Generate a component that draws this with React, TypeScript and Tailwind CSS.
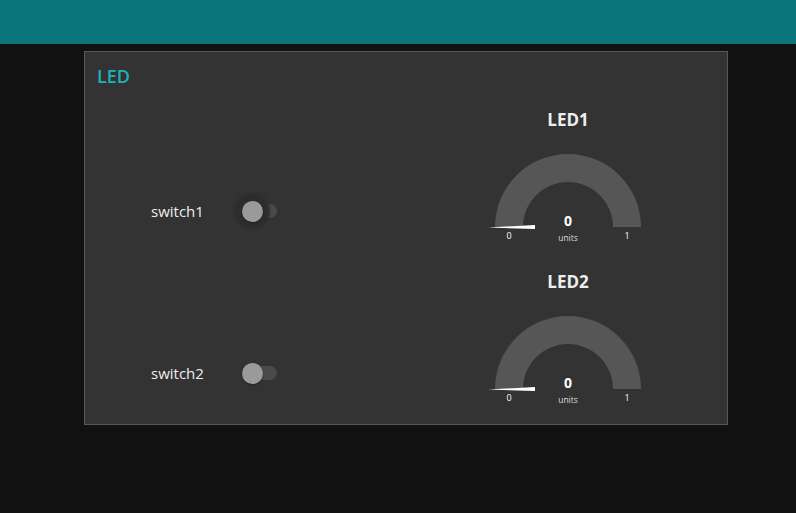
import React from 'react';

const FONT = { fontFamily: '"Open Sans", "Noto Sans", sans-serif' };

function Switch({ focused }: { focused?: boolean }) {
  return (
    <div className="relative w-[40px] h-[20px] flex items-center">
      <div className="absolute left-[7px] w-[28px] h-[14px] rounded-full bg-[#4a4a4a]" />
      {focused && (
        <div className="absolute left-[-8px] top-[-8px] w-[36px] h-[36px] rounded-full bg-[#2d2d2d] blur-[1px]" />
      )}
      <div className="absolute left-0 top-0 w-[21px] h-[21px] rounded-full bg-[#9a9a9a] shadow-[0_1px_2px_rgba(0,0,0,0.4)]" />
    </div>
  );
}

function Gauge({ title }: { title: string }) {
  return (
    <div className="w-[200px] flex flex-col items-center">
      <div className="h-[40px] flex items-center text-[17px] font-bold text-[#eeeeee]">{title}</div>
      <svg width="200" height="110" viewBox="0 0 200 110">
        <path d="M 27 87 A 73 73 0 0 1 173 87 L 145 87 A 45 45 0 0 0 55 87 Z" fill="#565656" />
        <polygon points="20,87.5 67,85 67,89" fill="#ffffff" />
        <text x="100" y="86" textAnchor="middle" fontSize="14" fontWeight="bold" fill="#ffffff" style={FONT}>0</text>
        <text x="41" y="99" textAnchor="middle" fontSize="9" fill="#ffffff" style={FONT}>0</text>
        <text x="159" y="99" textAnchor="middle" fontSize="9" fill="#ffffff" style={FONT}>1</text>
        <text x="100" y="101" textAnchor="middle" fontSize="8.5" fill="#dddddd" style={FONT}>units</text>
      </svg>
    </div>
  );
}

function Row({ label, title, focused }: { label: string; title: string; focused?: boolean }) {
  return (
    <div className="h-[162px] flex">
      <div className="w-[383px] pl-[66px] pt-[101px]">
        <div className="flex items-center h-[20px]">
          <span className="w-[91px] text-[15px] text-[#eeeeee] leading-[20px]">{label}</span>
          <Switch focused={focused} />
        </div>
      </div>
      <Gauge title={title} />
    </div>
  );
}

export default function App() {
  return (
    <div className="w-[796px] h-[513px] bg-[#111111] overflow-hidden" style={FONT}>
      <div className="h-[44px] bg-[#097479]" />
      <div className="ml-[84px] mt-[7px] w-[644px] h-[374px] border border-[#575757] bg-[#333333]">
        <div className="h-[48px] pl-[12px] pt-[12px] text-[18px] leading-[25px] font-semibold text-[#1fb0bd]">LED</div>
        <Row label="switch1" title="LED1" focused />
        <Row label="switch2" title="LED2" />
      </div>
    </div>
  );
}
